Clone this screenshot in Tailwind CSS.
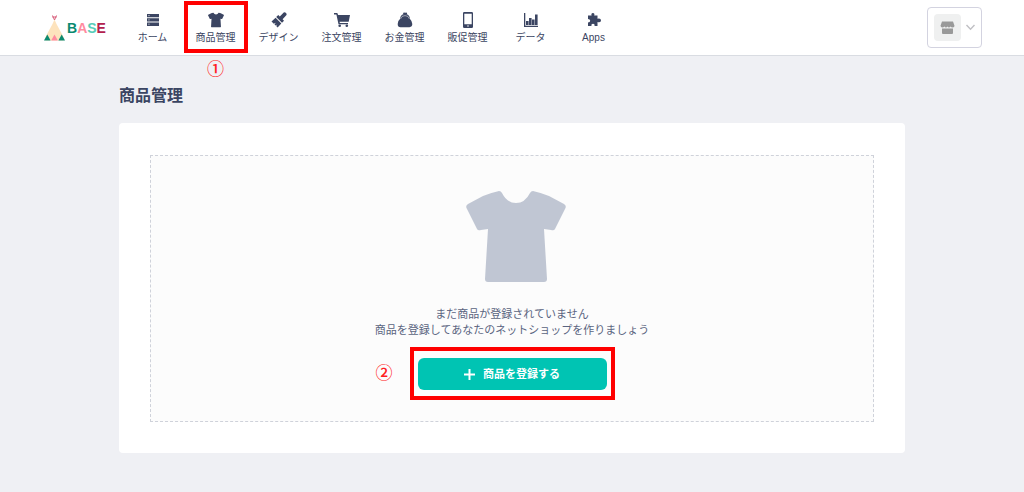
<!DOCTYPE html>
<html lang="ja">
<head>
    <meta charset="UTF-8">
    <meta name="viewport" content="width=device-width, initial-scale=1.0">
    <title>商品管理 | BASE</title>
    <script src="https://cdn.jsdelivr.net/npm/@tailwindcss/browser@4"></script>
</head>
<body class="min-h-screen bg-[#eff0f4] font-['Liberation_Sans','Noto_Sans_CJK_JP',sans-serif] text-[#3b4562]">
    <!-- Header -->
    <header class="flex h-14 items-start border-b border-[#d9dce2] bg-white pl-11 pr-[42px]">
        <a href="#" class="mt-3 flex h-8 w-[77px] items-center gap-0.5" aria-label="BASE">
            <svg class="h-[26px] w-[21px] shrink-0" viewBox="0 0 21 26">
                <path d="M10.5 4.5 L12.5 9 L19.5 22 V25.5 H1.5 V22 L8.5 9 Z" fill="#fde3bd"/>
                <path d="M8.5 .5 L10.5 5 L12.5 .5 M8.3 2 H12.7" fill="none" stroke="#d8607c" stroke-width="1"/>
                <path d="M3.3 19.5 L6.6 25.5 H0 Z" fill="#0b8a70"/>
                <path d="M10.5 19.5 L13.8 25.5 H7.2 Z" fill="#ff8ca0"/>
                <path d="M17.7 19.5 L21 25.5 H14.4 Z" fill="#0b8a70"/>
            </svg>
            <span class="text-[14px] font-bold leading-none"><span class="text-[#0b8a70]">B</span><span class="text-[#ff8ca0]">A</span><span class="text-[#57cdb8]">S</span><span class="text-[#b3214e]">E</span></span>
        </a>

        <nav>
            <ul class="flex text-[10px] leading-4">
                <li class="w-[63px]">
                    <a href="#" class="flex flex-col items-center gap-0.5 pt-3">
                        <svg class="size-4" viewBox="0 0 16 16" fill="currentColor">
                            <path d="M2 2h12v3.3H2zM2 6.3h12v3.3H2zM2 10.6h12v3.3H2z"/>
                            <path d="M3.2 3.6h1.5M3.2 7.9h1.5M3.2 12.2h1.5" stroke="#fff" stroke-width=".6"/>
                        </svg>
                        ホーム
                    </a>
                </li>
                <li class="relative w-[63px]">
                    <a href="#" class="flex flex-col items-center gap-0.5 pt-3">
                        <svg class="size-4" viewBox="0 0 100 91" fill="currentColor">
                            <path d="M34 0Q39 11 50 11T66 0Q76 1 83 5L98 13Q101 15 99 18L89 38Q88 40 85 39L78 38L81 88Q81 91 78 91H22Q19 91 19 88L22 38L15 39Q12 40 11 38L1 18Q-1 15 2 13L17 5Q24 1 34 0Z"/>
                        </svg>
                        商品管理
                    </a>
                    <div class="absolute left-0 top-px h-[52px] w-16 border-4 border-[#ff0000]"></div>
                    <div class="absolute left-0 top-[58px] w-full text-center text-[17px] font-medium leading-6 text-[#ff2020]">①</div>
                </li>
                <li class="w-[63px]">
                    <a href="#" class="flex flex-col items-center gap-0.5 pt-3">
                        <svg class="size-4" viewBox="0 0 16 16" fill="currentColor">
                            <path d="M12.7.5Q14 0 15 1T15.5 3L11.6 7.2L13 8.7L11 10.8L5.2 5L7.3 3L8.8 4.4Z"/>
                            <path d="M4.6 5.7L10.3 11.4L6.6 15.5L5.2 14L6.3 12.5L4.7 13.6L3.5 12.4L4.8 10.7L2.8 11.8L.5 9.5Z"/>
                        </svg>
                        デザイン
                    </a>
                </li>
                <li class="w-[63px]">
                    <a href="#" class="flex flex-col items-center gap-0.5 pt-3">
                        <svg class="size-4" viewBox="0 0 16 16" fill="currentColor">
                            <path d="M0 1h3.3l.8 2H16l-1.3 6.8H5.6l.2 1.2H14v1.3H4.5L2.4 2.6H0z"/>
                            <circle cx="5.7" cy="13.7" r="1.3"/>
                            <circle cx="12.8" cy="13.7" r="1.3"/>
                        </svg>
                        注文管理
                    </a>
                </li>
                <li class="w-[63px]">
                    <a href="#" class="flex flex-col items-center gap-0.5 pt-3">
                        <svg class="size-4" viewBox="0 0 16 16" fill="currentColor">
                            <circle cx="7.2" cy="1.6" r="1.1"/>
                            <circle cx="9" cy="1.6" r="1.1"/>
                            <path d="M3 7Q3.5 2 8 2T13 7Q15.3 9.3 15.3 12T12.5 15.3H3.5Q.7 15.3.7 12T3 7Z"/>
                            <path d="M3.6 6.8Q4.5 3.6 8 3.6T12.4 6.8" fill="none" stroke="#fff" stroke-width=".5"/>
                        </svg>
                        お金管理
                    </a>
                </li>
                <li class="w-[63px]">
                    <a href="#" class="flex flex-col items-center gap-0.5 pt-3">
                        <svg class="size-4" viewBox="0 0 16 16" fill="currentColor">
                            <path fill-rule="evenodd" d="M4.2 0h7.6Q13 0 13 1.2v13.6Q13 16 11.8 16H4.2Q3 16 3 14.8V1.2Q3 0 4.2 0zM4.3 1.8v10.4h7.4V1.8zM7.2 13.4v1.2h1.6v-1.2z"/>
                        </svg>
                        販促管理
                    </a>
                </li>
                <li class="w-[63px]">
                    <a href="#" class="flex flex-col items-center gap-0.5 pt-3">
                        <svg class="size-4" viewBox="0 0 16 16" fill="currentColor">
                            <path d="M1 1h1.3v12.7H15V15H1zM3 9h2.6v4H3zM6 6h2.6v7H6zM9 7.5h2.6V13H9zM12 2.5h2.6V13H12z"/>
                        </svg>
                        データ
                    </a>
                </li>
                <li class="w-[63px]">
                    <a href="#" class="flex flex-col items-center gap-0.5 pt-3">
                        <svg class="size-4" viewBox="0 0 16 16" fill="currentColor">
                            <path d="M2 3.5H5.6Q4.8 1 6.9 1T8.2 3.5H11.5V6.8Q15 6 15 8.5T11.5 10V14H8.6Q9 11.8 7 11.8T5.4 14H2V10.6Q4.2 10.3 4.2 8.7T2 6.9Z"/>
                        </svg>
                        Apps
                    </a>
                </li>
            </ul>
        </nav>

        <!-- Shop menu -->
        <button type="button" class="ml-auto mt-[7px] flex h-[41px] w-[55px] items-center gap-1 rounded border border-[#d3d3e0] bg-white pl-1.5" aria-label="ショップメニュー">
            <span class="flex size-[27px] items-center justify-center rounded-sm bg-[#eff0f0]">
                <svg class="size-[15px]" viewBox="0 0 15 15" fill="#999">
                    <path d="M2 1.5h11l1.5 4.3Q14.5 7.5 12.8 7.5T10.5 6.5Q9.8 7.5 9 7.5T7.5 6.5Q6.8 7.5 6 7.5T4.5 6.5Q3.6 7.5 2.2 7.5T.5 5.8Z"/>
                    <path d="M2 8.5h11V13q0 1-1 1H3q-1 0-1-1z"/>
                </svg>
            </span>
            <svg class="h-[7px] w-[11px]" viewBox="0 0 11 7" fill="none" stroke="#c0c0c4" stroke-width="1.4">
                <path d="M1.5 1l4 4.3 4-4.3"/>
            </svg>
        </button>
    </header>

    <!-- Main Content -->
    <main class="mx-auto max-w-[786px] pb-9 pt-7">
        <h1 class="text-base font-bold leading-6">商品管理</h1>

        <div class="mt-[15px] rounded-sm bg-white px-[31px] pb-[31px] pt-8">
            <section class="flex flex-col items-center border border-dashed border-[#cfd2da] bg-[#fcfcfc] pb-[31px] pt-[35px]">
                <svg class="ml-2 h-[91px] w-[100px]" viewBox="0 0 100 91" fill="#c0c6d3">
                    <path d="M33 0Q35 0 36 2Q41 12 50 12T64 2Q65 0 67 0Q76 2 83 5L98 13Q101 15 99 18L89 38Q88 40 85 39L78 38L81 88Q81 91 78 91H22Q19 91 19 88L22 38L15 39Q12 40 11 38L1 18Q-1 15 2 13L17 5Q24 2 33 0Z"/>
                </svg>
                <p class="mt-6 text-center text-[11px] leading-4 text-[#5a6480]">
                    まだ商品が登録されていません<br>
                    商品を登録してあなたのネットショップを作りましょう
                </p>
                <div class="relative mt-5">
                    <button type="button" class="flex h-8 w-[189px] items-center justify-center gap-2 rounded-md bg-[#00c4b3] text-[11px] font-bold text-white">
                        <svg class="size-[11px]" viewBox="0 0 11 11" stroke="currentColor" stroke-width="2">
                            <path d="M5.5 0v11M0 5.5h11"/>
                        </svg>
                        商品を登録する
                    </button>
                    <div class="pointer-events-none absolute -inset-x-2 -bottom-2.5 -top-[11px] border-4 border-[#ff0000]"></div>
                    <div class="absolute -left-[42px] top-1 text-[17px] font-medium leading-6 text-[#ff2020]">②</div>
                </div>
            </section>
        </div>
    </main>
</body>
</html>
